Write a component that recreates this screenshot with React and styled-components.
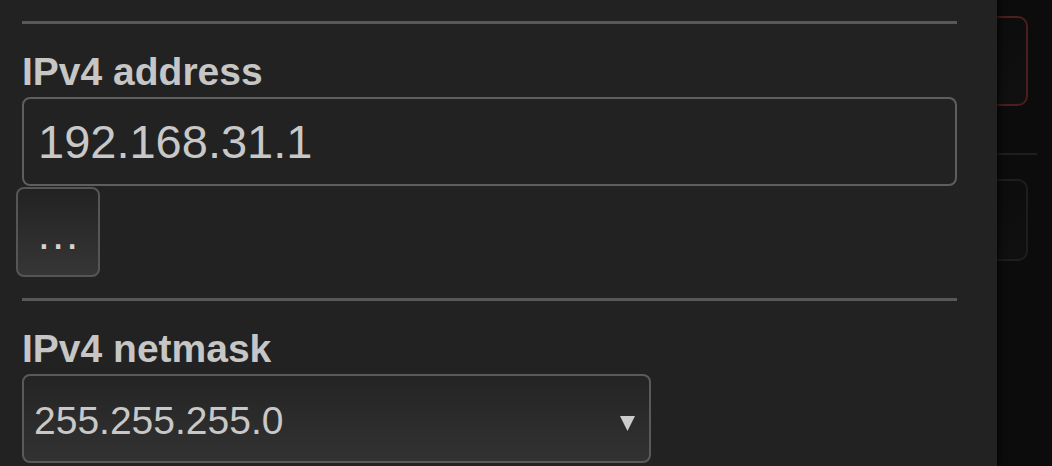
import React from "react";
import styled, { createGlobalStyle } from "styled-components";

const GlobalStyle = createGlobalStyle`
  html, body {
    margin: 0;
    padding: 0;
    background: #0c0c0c;
    font-family: "Liberation Sans", Arial, Helvetica, sans-serif;
  }
  * { box-sizing: border-box; }
`;

const Screen = styled.div`
  position: relative;
  width: 1052px;
  height: 466px;
  overflow: hidden;
  background: #0c0c0c;
`;

/* page content visible behind the side panel */
const Backdrop = styled.div`
  display: flex;
  flex-direction: column;
  padding: 16px 24px 0 40px;
`;

const BackField = styled.div`
  height: ${(p) => p.$h}px;
  border: 2px solid ${(p) => p.$border};
  border-radius: 10px;
  background: linear-gradient(#0d0d0d, #101010);
`;

const BackRule = styled.div`
  height: 2px;
  margin: 47px -9px 24px 0;
  background: #1f1f1f;
`;

/* the sliding settings panel that lies over the page */
const Panel = styled.div`
  position: absolute;
  top: 0;
  left: 0;
  bottom: 0;
  width: 997px;
  background: #222222;
  box-shadow: 2px 0 7px rgba(0, 0, 0, 0.7);
  padding: 21px 40px 0 22px;
  display: flex;
  flex-direction: column;
`;

const Rule = styled.hr`
  margin: 0;
  border: none;
  height: 3px;
  background: #585858;
`;

const Field = styled.div`
  display: flex;
  flex-direction: column;
  padding-top: 26px;
`;

const Label = styled.label`
  display: block;
  font-size: 39px;
  line-height: 44px;
  font-weight: 700;
  color: #c6c6c6;
  margin-bottom: 3px;
`;

const TextInput = styled.input`
  width: 100%;
  height: 89px;
  margin: 0;
  padding: 0 14px;
  border: 2px solid #5e5e5e;
  border-radius: 8px;
  background: #222222;
  color: #c8c8c8;
  font-family: "Liberation Sans", Arial, sans-serif;
  font-size: 47px;
  outline: none;
`;

const MoreButton = styled.button`
  width: 84px;
  height: 90px;
  margin: 1px 0 21px -6px;
  padding: 4px 0 0 2px;
  border: 2px solid #565656;
  border-radius: 8px;
  background: linear-gradient(#222222, #363636);
  color: #d4d4d4;
  font-family: "Liberation Sans", Arial, sans-serif;
  font-size: 44px;
  letter-spacing: 2px;
  line-height: 1;
  display: flex;
  align-items: center;
  justify-content: center;
`;

const SelectBox = styled.div`
  width: 629px;
  height: 89px;
  padding: 0 14px 0 10px;
  border: 2px solid #5a5a5a;
  border-radius: 8px;
  background: linear-gradient(#242424, #323232);
  display: flex;
  align-items: center;
  justify-content: space-between;
  color: #c8c8c8;
  font-size: 39px;
`;

const SelectValue = styled.span`
  padding-top: 5px;
`;

const Arrow = styled.svg`
  width: 15px;
  height: 15px;
  margin-top: 10px;
  flex: none;
`;

export default function App() {
  return (
    <>
      <GlobalStyle />
      <Screen>
        <Backdrop>
          <BackField $h={90} $border="#4e1d1d" />
          <BackRule />
          <BackField $h={82} $border="#1e1e1e" />
        </Backdrop>
        <Panel>
          <Rule />
          <Field>
            <Label htmlFor="ipaddr">IPv4 address</Label>
            <TextInput id="ipaddr" readOnly value="192.168.31.1" />
          </Field>
          <MoreButton type="button">...</MoreButton>
          <Rule />
          <Field>
            <Label>IPv4 netmask</Label>
            <SelectBox>
              <SelectValue>255.255.255.0</SelectValue>
              <Arrow viewBox="0 0 15 15">
                <polygon points="0,0 15,0 7.5,15" fill="#cccccc" />
              </Arrow>
            </SelectBox>
          </Field>
        </Panel>
      </Screen>
    </>
  );
}
